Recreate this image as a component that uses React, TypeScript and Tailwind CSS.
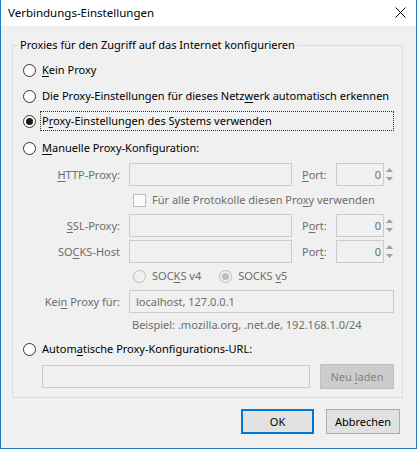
import React from 'react';

const font = { fontFamily: '"Noto Sans", "Open Sans", sans-serif' };

function U({ children }: { children: React.ReactNode }) {
  return <span className="underline underline-offset-[2px] decoration-1">{children}</span>;
}

function Radio({ checked, disabled }: { checked?: boolean; disabled?: boolean }) {
  return (
    <span
      className={`flex h-[13px] w-[13px] shrink-0 items-center justify-center rounded-full border ${
        disabled ? 'border-[#bcbcbc] bg-[#f0f0f0]' : 'border-[#333333] bg-white'
      }`}
    >
      {checked && (
        <span className={`h-[7px] w-[7px] rounded-full ${disabled ? 'bg-[#bcbcbc]' : 'bg-[#1a1a1a]'}`} />
      )}
    </span>
  );
}

function Field({ className = '', children }: { className?: string; children?: React.ReactNode }) {
  return (
    <div className={`flex h-[23px] items-center border border-[#cccccc] bg-[#f0f0f0] px-[6px] text-[#6d6d6d] ${className}`}>
      {children}
    </div>
  );
}

function PortBox() {
  return (
    <div className="flex h-[23px] w-[58px] items-stretch">
      <div className="flex flex-1 items-center justify-end border border-[#cccccc] pr-[2px] text-[#6d6d6d]">0</div>
      <div className="flex w-[10px] flex-col items-center justify-center gap-[5px]">
        <svg width="7" height="4" viewBox="0 0 7 4"><path d="M0 4 L3.5 0 L7 4 Z" fill="#a0a0a0" /></svg>
        <svg width="7" height="4" viewBox="0 0 7 4"><path d="M0 0 L3.5 4 L7 0 Z" fill="#a0a0a0" /></svg>
      </div>
    </div>
  );
}

function ProxyRow({ label, port, mt }: { label: React.ReactNode; port: React.ReactNode; mt: string }) {
  return (
    <div className={`flex h-[23px] items-center ${mt}`}>
      <div className="w-[107px] text-right text-[#6d6d6d]">{label}</div>
      <Field className="ml-[9px] w-[163px]" />
      <div className="ml-[10px] w-[34px] text-[#6d6d6d]">{port}</div>
      <PortBox />
    </div>
  );
}

export default function App() {
  return (
    <div
      className="flex h-[449px] w-[417px] flex-col whitespace-nowrap border-x border-b border-[#1979ca] bg-[#f0f0f0] text-[11px] leading-[16px] text-black"
      style={font}
    >
      {/* Titelleiste */}
      <div className="flex h-[26px] shrink-0 items-center justify-between bg-white pl-[7px] pr-[10px]">
        <span className="text-[11.5px]">Verbindungs-Einstellungen</span>
        <svg width="11" height="11" viewBox="0 0 11 11" className="mb-[1px]">
          <path d="M0.5 0.5 L10.5 10.5 M10.5 0.5 L0.5 10.5" stroke="#000" strokeWidth="1" />
        </svg>
      </div>

      {/* Gruppe */}
      <fieldset className="ml-[11px] mr-[13px] mt-[11px] border border-[#dcdcdc] pb-[8px]">
        <legend className="ml-[5px] px-[2px] leading-[16px]">
          Proxies für den Zugriff auf das Internet konfigurieren
        </legend>

        <div className="mt-[5px] flex h-[24px] items-center pl-[10px]">
          <Radio />
          <span className="ml-[6px]"><U>K</U>ein Proxy</span>
        </div>
        <div className="mt-[2px] flex h-[24px] items-center pl-[10px]">
          <Radio />
          <span className="ml-[6px]">Die Proxy-Einstellungen für dieses Netz<U>w</U>erk automatisch erkennen</span>
        </div>
        <div className="mt-[3px] flex h-[20px] items-center pl-[10px] pr-[8px]">
          <Radio checked />
          <span className="ml-[4px] flex h-[20px] flex-1 items-center border border-dotted border-[#333] pl-[1px]">
            <span>P<U>r</U>oxy-Einstellungen des Systems verwenden</span>
          </span>
        </div>
        <div className="mt-[6px] flex h-[22px] items-center pl-[10px]">
          <Radio />
          <span className="ml-[6px]"><U>M</U>anuelle Proxy-Konfiguration:</span>
        </div>

        <ProxyRow mt="mt-[4px]" label={<><U>H</U>TTP-Proxy:</>} port={<><U>P</U>ort:</>} />

        <div className="mt-[5px] flex h-[18px] items-center pl-[120px] text-[#6d6d6d]">
          <span className="h-[13px] w-[13px] border border-[#bcbcbc] bg-[#fcfcfc]" />
          <span className="ml-[6px]">Für alle Protokolle diesen Pro<U>x</U>y verwenden</span>
        </div>

        <ProxyRow mt="mt-[5px]" label={<><U>S</U>SL-Proxy:</>} port={<>P<U>o</U>rt:</>} />
        <ProxyRow mt="mt-[3px]" label={<>SO<U>C</U>KS-Host</>} port={<>Por<U>t</U>:</>} />

        <div className="mt-[4px] flex h-[18px] items-center pl-[120px] text-[#6d6d6d]">
          <Radio disabled />
          <span className="ml-[6px]">SOC<U>K</U>S v4</span>
          <span className="ml-[18px]"><Radio checked disabled /></span>
          <span className="ml-[6px]">SOCKS <U>v</U>5</span>
        </div>

        <div className="mt-[5px] flex h-[23px] items-center">
          <div className="w-[107px] text-right text-[#6d6d6d]">Kei<U>n</U> Proxy für:</div>
          <Field className="ml-[9px] mr-[8px] flex-1">localhost, 127.0.0.1</Field>
        </div>
        <div className="mt-[4px] flex h-[16px] items-center pl-[119px] text-[#6d6d6d]">
          <span>Beispiel: .mozilla.org, .net.de, 192.168.1.0/24</span>
        </div>

        <div className="mt-[7px] flex h-[18px] items-center pl-[10px]">
          <Radio />
          <span className="ml-[6px]">Autom<U>a</U>tische Proxy-Konfigurations-URL:</span>
        </div>
        <div className="mt-[6px] flex h-[25px] items-center pl-[29px] pr-[8px]">
          <Field className="h-[22px] w-[268px]" />
          <div className="ml-[10px] flex h-[25px] flex-1 items-center justify-center border border-[#bfbfbf] bg-[#cccccc] text-[#838383]">
            <span>Neu <U>l</U>aden</span>
          </div>
        </div>
      </fieldset>

      {/* Schaltflächen */}
      <div className="mr-[16px] mt-[11px] flex justify-end gap-[12px]">
        <div className="flex h-[25px] w-[73px] items-center justify-center border-2 border-[#0078d7] bg-[#e1e1e1]">OK</div>
        <div className="flex h-[25px] w-[74px] items-center justify-center border border-[#adadad] bg-[#e1e1e1]">Abbrechen</div>
      </div>
    </div>
  );
}
